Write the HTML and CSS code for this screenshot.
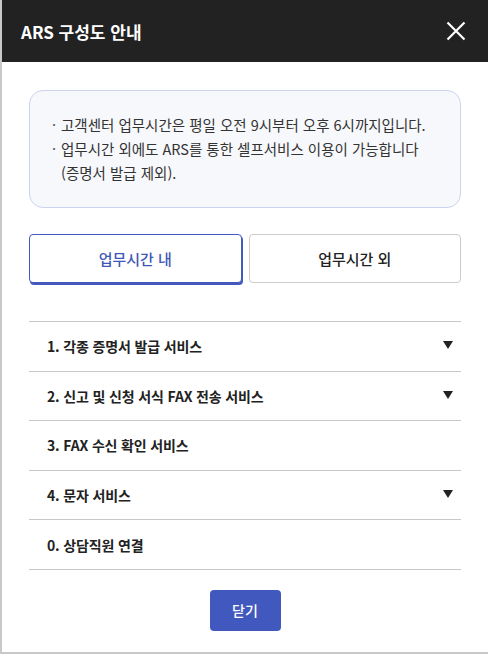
FILE: index.html
```html
<!DOCTYPE html>
<html lang="ko">
<head>
<meta charset="utf-8">
<title>ARS 구성도 안내</title>
<link rel="stylesheet" href="styles.css">
</head>
<body>
<div class="modal">
  <header class="modal-head">
    <h1 class="modal-title">ARS 구성도 안내</h1>
    <button class="close-x" aria-label="닫기">
      <svg width="20" height="20" viewBox="0 0 20 20"><path d="M1.5 1.5L18.5 18.5M18.5 1.5L1.5 18.5" stroke="#fff" stroke-width="2.2" fill="none"/></svg>
    </button>
  </header>
  <div class="modal-body">
    <ul class="notice">
      <li>고객센터 업무시간은 평일 오전 9시부터 오후 6시까지입니다.</li>
      <li>업무시간 외에도 ARS를 통한 셀프서비스 이용이 가능합니다 (증명서 발급 제외).</li>
    </ul>
    <div class="tabs">
      <button class="tab active">업무시간 내</button>
      <button class="tab">업무시간 외</button>
    </div>
    <ul class="menu">
      <li class="row"><span>1. 각종 증명서 발급 서비스</span><i class="tri"></i></li>
      <li class="row"><span>2. 신고 및 신청 서식 FAX 전송 서비스</span><i class="tri"></i></li>
      <li class="row"><span>3. FAX 수신 확인 서비스</span></li>
      <li class="row"><span>4. 문자 서비스</span><i class="tri"></i></li>
      <li class="row"><span>0. 상담직원 연결</span></li>
    </ul>
    <div class="actions">
      <button class="btn-close">닫기</button>
    </div>
  </div>
</div>
</body>
</html>
```
FILE: styles.css
```css
* { box-sizing: border-box; }
html, body { margin: 0; padding: 0; }
body {
  background: #c9c9c9;
  font-family: "Noto Sans CJK KR", "Noto Sans", sans-serif;
  color: #222;
  padding-left: 2px;
}
.modal {
  background: #fff;
  width: 486px;
  height: 652px;
}
.modal-head {
  height: 62px;
  background: #222;
  display: flex;
  align-items: center;
  justify-content: space-between;
  padding: 0 22px 0 19px;
}
.modal-title {
  margin: 0;
  color: #fff;
  font-size: 17px;
  font-weight: 700;
}
.close-x {
  background: none;
  border: 0;
  padding: 0;
  width: 20px;
  height: 20px;
  display: flex;
}
.modal-body {
  padding: 28px 27px 0 27px;
}
.notice {
  margin: 0;
  list-style: none;
  background: #f7f8fb;
  border: 1px solid #ccd3ee;
  border-radius: 14px;
  padding: 22px 20px 22px 31px;
  font-size: 14.5px;
  line-height: 24px;
  color: #333;
}
.notice li { position: relative; }
.notice li::before {
  content: "·";
  position: absolute;
  left: -9px;
  top: 0;
  color: #555;
}
.tabs {
  display: grid;
  grid-template-columns: 1fr 1fr;
  gap: 7px;
  margin-top: 26px;
}
.tab {
  height: 49px;
  background: #fff;
  border: 1px solid #ccc;
  border-radius: 4px;
  font-family: inherit;
  font-size: 15px;
  font-weight: 500;
  color: #222;
}
.tab.active {
  border-color: #4459bd;
  box-shadow: 1px 2px 0 #4459bd;
  color: #4257b6;
}
.menu {
  list-style: none;
  margin: 38px 0 0;
  padding: 0;
  border-top: 1px solid #c8c8c8;
}
.row {
  height: 49.6px;
  border-bottom: 1px solid #c8c8c8;
  display: flex;
  align-items: center;
  justify-content: space-between;
  padding: 0 8px 0 18px;
  font-size: 14px;
  font-weight: 700;
  letter-spacing: -0.15px;
}
.tri {
  width: 0;
  height: 0;
  border-left: 5px solid transparent;
  border-right: 5px solid transparent;
  border-top: 8px solid #222;
  margin-top: -2px;
}
.actions {
  display: flex;
  justify-content: center;
  padding-top: 20px;
}
.btn-close {
  width: 71px;
  height: 41px;
  background: #4159bf;
  border: 0;
  border-radius: 4px;
  color: #fff;
  font-family: inherit;
  font-size: 14px;
  font-weight: 500;
}
```
